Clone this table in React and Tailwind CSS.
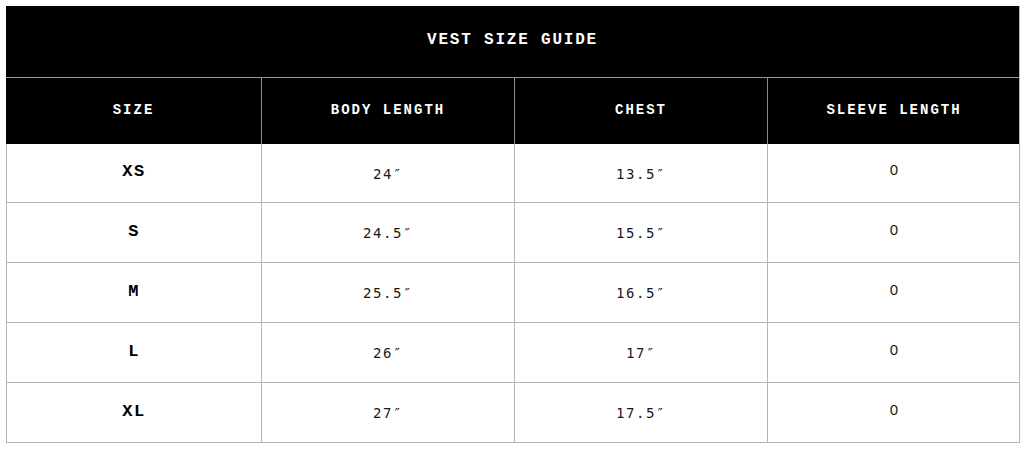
const rows = [
  { size: "XS", body: "24″", chest: "13.5″", sleeve: "0" },
  { size: "S", body: "24.5″", chest: "15.5″", sleeve: "0" },
  { size: "M", body: "25.5″", chest: "16.5″", sleeve: "0" },
  { size: "L", body: "26″", chest: "17″", sleeve: "0" },
  { size: "XL", body: "27″", chest: "17.5″", sleeve: "0" },
];

const mono = "font-['Liberation_Mono','Courier_New',monospace]";

export default function App() {
  return (
    <div className="w-[1028px] h-[449px] bg-white pt-[6px] pl-[6px]">
      <div className="w-[1014px] border-r border-b border-[#b5b5b5]">
        {/* TITLE */}
        <div className={`h-[71px] pb-[3px] bg-black text-white flex items-center justify-center font-bold text-[16px] tracking-[1.8px] ${mono}`}>
          VEST SIZE GUIDE
        </div>

        {/* HEADER */}
        <div className="grid grid-cols-[255px_253px_253px_253px] h-[67px] bg-black border-t border-[#9a9a9a]">
          {["SIZE", "BODY LENGTH", "CHEST", "SLEEVE LENGTH"].map((h, i) => (
            <div
              key={h}
              className={`flex items-center justify-center pb-[2px] text-white font-bold text-[14px] tracking-[2px] ${mono} ${i > 0 ? "border-l border-[#8a8a8a]" : ""}`}
            >
              {h}
            </div>
          ))}
        </div>

        {/* ROWS */}
        {rows.map((r, idx) => (
          <div
            key={r.size}
            className={`grid grid-cols-[254px_253px_253px_253px] border-l border-[#b5b5b5] ${idx > 0 ? "border-t h-[60px]" : "h-[58px]"}`}
          >
            <div className={`flex items-center justify-center pb-[2px] font-bold text-[17px] tracking-[1.5px] text-black ${mono}`}>
              {r.size}
            </div>
            <div className="flex items-center justify-center pt-[2px] border-l border-[#b5b5b5] text-[14px] tracking-[1.6px] text-[#1a1a1a] font-['DejaVu_Sans_Mono',monospace]">
              {r.body}
            </div>
            <div className="flex items-center justify-center pt-[2px] border-l border-[#b5b5b5] text-[14px] tracking-[1.6px] text-[#1a1a1a] font-['DejaVu_Sans_Mono',monospace]">
              {r.chest}
            </div>
            <div className="flex items-center justify-center pb-[5px] border-l border-[#b5b5b5] text-[15px] text-[#1a1a1a] font-['Liberation_Sans',Arial,sans-serif]">
              {r.sleeve}
            </div>
          </div>
        ))}
      </div>
    </div>
  );
}
